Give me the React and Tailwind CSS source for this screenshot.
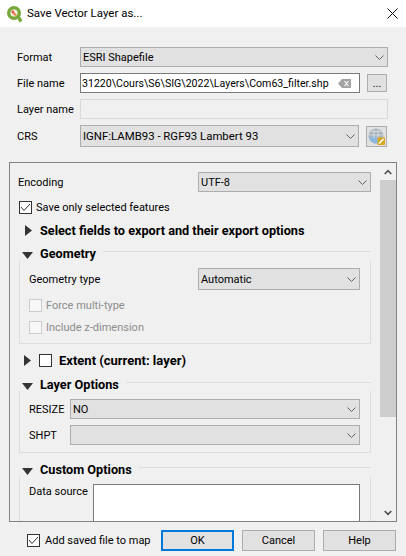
import React from "react";

function Chevron({ className = "" }) {
  return (
    <svg width="9" height="5" viewBox="0 0 9 5" className={className}>
      <path d="M0.5 0.5 L4.5 4.5 L8.5 0.5" fill="none" stroke="#606060" strokeWidth="1" />
    </svg>
  );
}

function ScrollArrow({ className = "" }) {
  return (
    <svg width="8" height="6" viewBox="0 0 8 6" className={className}>
      <path d="M0.7 1 L4 4.3 L7.3 1" fill="none" stroke="#505050" strokeWidth="1.7" />
    </svg>
  );
}

function Combo({ text, className = "", textClassName = "" }) {
  return (
    <div className={`flex items-center justify-between border border-[#adadad] bg-[#e1e1e1] pl-[2px] pr-[3px] ${className}`}>
      <span className={`text-black whitespace-nowrap ${textClassName}`}>{text}</span>
      <Chevron />
    </div>
  );
}

function Check({ checked, disabled, className = "" }) {
  return (
    <div className={`flex h-[13px] w-[13px] shrink-0 items-center justify-center border ${disabled ? "border-[#cccccc]" : "border-[#333333]"} ${disabled ? "bg-[#f7f7f7]" : "bg-white"} ${className}`}>
      {checked && (
        <svg width="11" height="9" viewBox="0 0 11 9">
          <path d="M1 4 L4 7.5 L10 1" fill="none" stroke="#333333" strokeWidth="1" />
        </svg>
      )}
    </div>
  );
}

function ArrowRight({ className = "" }) {
  return (
    <svg width="7" height="11" viewBox="0 0 7 11" className={className}>
      <path d="M0 0 L7 5.5 L0 11 Z" fill="#333333" />
    </svg>
  );
}

function ArrowDown({ className = "" }) {
  return (
    <svg width="11" height="7" viewBox="0 0 11 7" className={className}>
      <path d="M0 0 L11 0 L5.5 7 Z" fill="#333333" />
    </svg>
  );
}

function GroupTitle({ title }) {
  return (
    <div className="flex h-[15px] items-start">
      <div className="flex h-[15px] items-start pl-[3px]">
        <ArrowDown className="mt-[5px]" />
        <span className="ml-[7px] mt-[-1px] text-[12.7px] font-bold text-black">{title}</span>
      </div>
      <div className="ml-[7px] mt-[4px] h-px flex-1 bg-[#dcdcdc]" />
    </div>
  );
}

function QgisLogo() {
  return (
    <svg width="17" height="18" viewBox="0 0 17 18">
      <path d="M8 1 A7 7 0 1 0 8 15 A7 7 0 1 0 8 1 Z M8 4.5 A3.5 3.5 0 1 1 8 11.5 A3.5 3.5 0 1 1 8 4.5 Z" fill="#79a83a" fillRule="evenodd" />
      <path d="M10 10.5 L13 10 L16.5 15.5 L13.5 17.5 Z" fill="#79a83a" />
      <circle cx="8" cy="8" r="3.2" fill="#f4efe0" />
      <path d="M7 6 L11 10 L9 11 L6 8 Z" fill="#ee7f4a" />
      <circle cx="6.8" cy="6.8" r="1.3" fill="#d9503a" />
    </svg>
  );
}

function CrsIcon() {
  return (
    <svg width="17" height="17" viewBox="0 0 17 17">
      <circle cx="8" cy="8" r="7.5" fill="#a9b4bd" />
      <path d="M1 9 A7.5 7.5 0 0 0 13 14 L8 9 Z" fill="#8db8e0" />
      <path d="M3 3.5 H13 M1 7 H15 M6 1 V10 M10 1 V10" stroke="#dde1e4" strokeWidth="0.8" />
      <rect x="9.5" y="9.5" width="7.5" height="7.5" fill="#d9a81e" />
      <path d="M11 15.5 L15.5 11" stroke="#ffffff" strokeWidth="1.6" />
    </svg>
  );
}

export default function App() {
  return (
    <div className="flex h-[556px] w-[406px] flex-col overflow-hidden bg-[#f0f0f0] font-['Roboto',sans-serif] text-[11px] leading-[15px] text-black">
      {/* Title bar */}
      <div className="flex h-[27px] shrink-0 items-center bg-white pl-[6px] pr-[8px]">
        <QgisLogo />
        <span className="ml-[4px] text-[11.5px]">Save Vector Layer as...</span>
        <svg width="11" height="11" viewBox="0 0 11 11" className="ml-auto">
          <path d="M0.5 0.5 L10.5 10.5 M10.5 0.5 L0.5 10.5" stroke="#111111" strokeWidth="1" />
        </svg>
      </div>

      {/* Form rows */}
      <div className="shrink-0 pl-[17px] pr-[18px] pt-[20px]">
        <div className="flex items-center">
          <span className="w-[63px]">Format</span>
          <Combo text="ESRI Shapefile" className="h-[20px] flex-1" />
        </div>
        <div className="mt-[6px] flex items-center">
          <span className="w-[63px]">File name</span>
          <div className="flex h-[20px] w-[280px] items-center overflow-hidden border border-[#7a7a7a] bg-white pl-px pr-[8px]">
            <span className="whitespace-nowrap text-[10.6px]">31220\Cours\S6\SIG\2022\Layers\Com63_filter.shp</span>
            <svg width="13" height="9" viewBox="0 0 13 9" className="ml-auto shrink-0">
              <path d="M4 0 H13 V9 H4 L0 4.5 Z" fill="#a3a3a3" />
              <path d="M6.5 2 L10.5 7 M10.5 2 L6.5 7" stroke="#ffffff" strokeWidth="1.2" />
            </svg>
          </div>
          <div className="ml-[7px] flex h-[18px] w-[20px] items-center justify-center border border-[#adadad] bg-[#e1e1e1]">...</div>
        </div>
        <div className="mt-[6px] flex items-center">
          <span className="w-[63px]">Layer name</span>
          <div className="h-[20px] flex-1 border border-[#d9d9d9] bg-[#f0f0f0]" />
        </div>
        <div className="mt-[6px] flex items-center">
          <span className="w-[63px]">CRS</span>
          <Combo text="IGNF:LAMB93 - RGF93 Lambert 93" className="h-[22px] w-[279px]" textClassName="text-[11.4px]" />
          <div className="ml-[7px] flex h-[21px] w-[21px] items-center justify-center border border-[#adadad] bg-[#e1e1e1]">
            <CrsIcon />
          </div>
        </div>
      </div>

      {/* Scroll area */}
      <div className="ml-[9px] mt-[15px] flex h-[360px] w-[388px] shrink-0 overflow-hidden border border-[#828282]">
        <div className="h-[358px] w-[370px] shrink-0 overflow-hidden pl-[8px]">
          <div className="mt-[9px] flex items-center pr-[9px]">
            <span className="w-[180px] pt-px">Encoding</span>
            <Combo text="UTF-8" className="h-[20px] flex-1" />
          </div>
          <div className="mt-[9px] flex h-[13px] items-center pl-px">
            <Check checked />
            <span className="ml-[4px]">Save only selected features</span>
          </div>
          <div className="mt-[11px] flex h-[11px] items-center pl-[7px]">
            <ArrowRight />
            <span className="ml-[8px] text-[12.7px] font-bold">Select fields to export and their export options</span>
          </div>

          {/* Geometry */}
          <div className="mr-[9px] mt-[11px] pl-px">
            <GroupTitle title="Geometry" />
            <div className="-mt-[2px] h-[84px] border-x border-b border-[#dcdcdc] pl-[9px] pr-[10px] pt-[8px]">
              <div className="flex items-center">
                <span className="w-[169px]">Geometry type</span>
                <Combo text="Automatic" className="h-[22px] flex-1" />
              </div>
              <div className="mt-[9px] flex h-[13px] items-center">
                <Check disabled />
                <span className="ml-[4px] text-[#8c8c8c]">Force multi-type</span>
              </div>
              <div className="mt-[9px] flex h-[13px] items-center">
                <Check disabled />
                <span className="ml-[4px] text-[#8c8c8c]">Include z-dimension</span>
              </div>
            </div>
          </div>

          {/* Extent */}
          <div className="mt-[10px] flex h-[13px] items-center pl-[6px]">
            <ArrowRight />
            <Check className="ml-[8px]" />
            <span className="ml-[7px] text-[13px] font-bold">Extent (current: layer)</span>
          </div>

          {/* Layer Options */}
          <div className="mr-[9px] mt-[11px] pl-px">
            <GroupTitle title="Layer Options" />
            <div className="-mt-[2px] h-[62px] border-x border-b border-[#dcdcdc] pl-[9px] pr-[10px] pt-[8px]">
              <div className="flex items-center">
                <span className="w-[41px]">RESIZE</span>
                <Combo text="NO" className="h-[20px] flex-1" />
              </div>
              <div className="mt-[6px] flex items-center">
                <span className="w-[41px]">SHPT</span>
                <Combo text="" className="h-[20px] flex-1" />
              </div>
            </div>
          </div>

          {/* Custom Options */}
          <div className="mr-[9px] mt-[10px] pl-px">
            <GroupTitle title="Custom Options" />
            <div className="-mt-[2px] flex h-[60px] items-start border-x border-[#dcdcdc] pl-[9px] pr-[10px] pt-[8px]">
              <span className="w-[64px] whitespace-nowrap">Data source</span>
              <div className="h-[60px] flex-1 border border-[#7a7a7a] bg-white" />
            </div>
          </div>
        </div>

        {/* Scrollbar */}
        <div className="flex w-[16px] shrink-0 flex-col bg-[#f0f0f0]">
          <div className="flex h-[17px] items-center justify-center">
            <ScrollArrow className="rotate-180" />
          </div>
          <div className="h-[237px] bg-[#cdcdcd]" />
          <div className="mt-auto flex h-[17px] items-center justify-center">
            <ScrollArrow />
          </div>
        </div>
      </div>

      {/* Footer */}
      <div className="mt-[8px] flex items-center pl-[27px]">
        <Check checked />
        <span className="ml-[5px] w-[116px]">Add saved file to map</span>
        <div className="flex h-[21px] w-[73px] items-center justify-center border-2 border-[#0078d7] bg-[#e1e1e1]">OK</div>
        <div className="ml-[8px] flex h-[21px] w-[73px] items-center justify-center border border-[#adadad] bg-[#e1e1e1]">Cancel</div>
        <div className="ml-[8px] flex h-[21px] w-[73px] items-center justify-center border border-[#adadad] bg-[#e1e1e1]">Help</div>
      </div>
    </div>
  );
}
